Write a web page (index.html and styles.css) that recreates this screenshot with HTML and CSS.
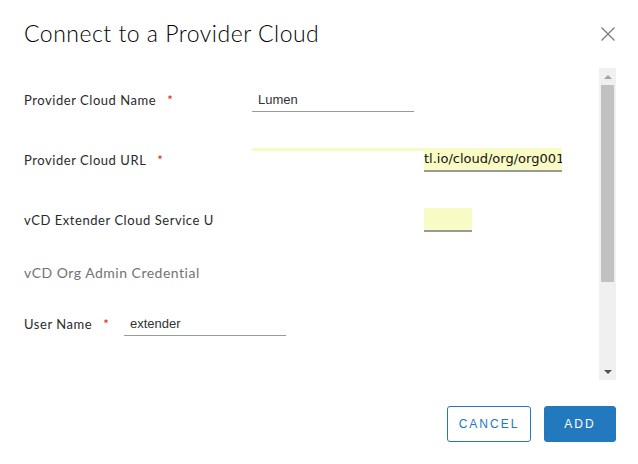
FILE: index.html
```html
<!DOCTYPE html>
<html>
<head>
<meta charset="utf-8">
<link rel="stylesheet" href="styles.css">
</head>
<body>
<div class="modal">
  <div class="header">
    <h1 class="title">Connect to a Provider Cloud</h1>
    <button class="close" aria-label="Close">
      <svg width="16" height="16" viewBox="0 0 16 16"><path d="M1.5 1.5 L14.5 14.5 M14.5 1.5 L1.5 14.5" stroke="#7a7a7a" stroke-width="1.3" fill="none"/></svg>
    </button>
  </div>
  <div class="body">
    <div class="form">
      <div class="row r60">
        <div class="label">Provider Cloud Name<span class="req">*</span></div>
        <div class="input w162">Lumen</div>
      </div>
      <div class="row r60">
        <div class="label">Provider Cloud URL<span class="req">*</span></div>
        <div class="url">
          <div class="strip"></div>
          <div class="ybox url-box"><span>tl.io/cloud/org/org001</span></div>
        </div>
      </div>
      <div class="row r60">
        <div class="label">vCD Extender Cloud Service U</div>
        <div class="url">
          <div class="gap"></div>
          <div class="ybox small-box"></div>
        </div>
      </div>
      <div class="row r44">
        <div class="section">vCD Org Admin Credential</div>
      </div>
      <div class="row r60">
        <div class="label short">User Name<span class="req">*</span></div>
        <div class="input w162">extender</div>
      </div>
    </div>
    <div class="scrollbar">
      <div class="arrow up"></div>
      <div class="track"><div class="thumb"></div></div>
      <div class="arrow down"></div>
    </div>
  </div>
  <div class="footer">
    <button class="btn outline">CANCEL</button>
    <button class="btn primary">ADD</button>
  </div>
</div>
</body>
</html>
```
FILE: styles.css
```css
* { box-sizing: border-box; }
html, body { margin: 0; padding: 0; background: #fff; }
body { width: 638px; height: 464px; overflow: hidden; font-family: "Lato", "Liberation Sans", sans-serif; color: #000; }
.modal { display: flex; flex-direction: column; width: 638px; height: 464px; }
.header { display: flex; justify-content: space-between; align-items: center; height: 68px; padding: 0 22px 2px 24px; }
.title { margin: 0; font-weight: 300; font-size: 23px; letter-spacing: 0.5px; color: #000; }
.close { border: 0; background: none; padding: 0; width: 16px; height: 16px; margin-top: 2px; }
.close svg { display: block; }
.body { display: flex; height: 312px; }
.form { flex: 1; padding: 2px 0 0 24px; }
.row { display: flex; align-items: center; }
.r60 { height: 60px; }
.r44 { height: 44px; }
.label { width: 228px; font-size: 13px; letter-spacing: 0.55px; color: #2a2a2a; display: flex; align-items: center; }
.label.short { width: 100px; }
.req { color: #c92100; margin-left: 11px; font-size: 13px; }
.section { font-size: 14px; letter-spacing: 0.5px; color: #737373; }
.input { height: 24px; border-bottom: 1px solid #9a9a9a; font-family: "Liberation Sans", Arial, sans-serif; font-size: 13px; color: #333; padding: 4px 0 0 6px; }
.w162 { width: 162px; }
.url { display: flex; align-items: flex-start; height: 24px; }
.strip { width: 172px; height: 3px; background: #f7fac5; }
.gap { width: 172px; }
.ybox { background: #f9fbc5; border-bottom: 2px solid #9a9a9a; height: 24px; }
.url-box { width: 138px; overflow: hidden; white-space: nowrap; font-family: "DejaVu Sans", sans-serif; font-size: 13px; color: #111; padding-top: 3px; }
.small-box { width: 48px; }
.scrollbar { width: 17px; margin-right: 22px; background: #f0f0f0; display: flex; flex-direction: column; }
.arrow { height: 17px; display: flex; align-items: center; justify-content: center; }
.arrow::before { content: ""; width: 0; height: 0; border-left: 4px solid transparent; border-right: 4px solid transparent; }
.up::before { border-bottom: 4px solid #a3a3a3; }
.down::before { border-top: 4px solid #505050; }
.track { flex: 1; padding: 0 2px; }
.thumb { height: 197px; background: #c1c1c1; }
.footer { flex: 1; display: flex; justify-content: flex-end; align-items: flex-start; gap: 13px; padding: 26px 22px 0 0; }
.btn { height: 36px; border-radius: 3px; font-family: "Liberation Sans", Arial, sans-serif; font-size: 12px; letter-spacing: 2px; cursor: pointer; }
.outline { width: 84px; background: #fff; border: 1px solid #2379bd; color: #2379bd; }
.primary { width: 72px; background: #2379bd; border: 1px solid #2379bd; color: #fff; }
```
